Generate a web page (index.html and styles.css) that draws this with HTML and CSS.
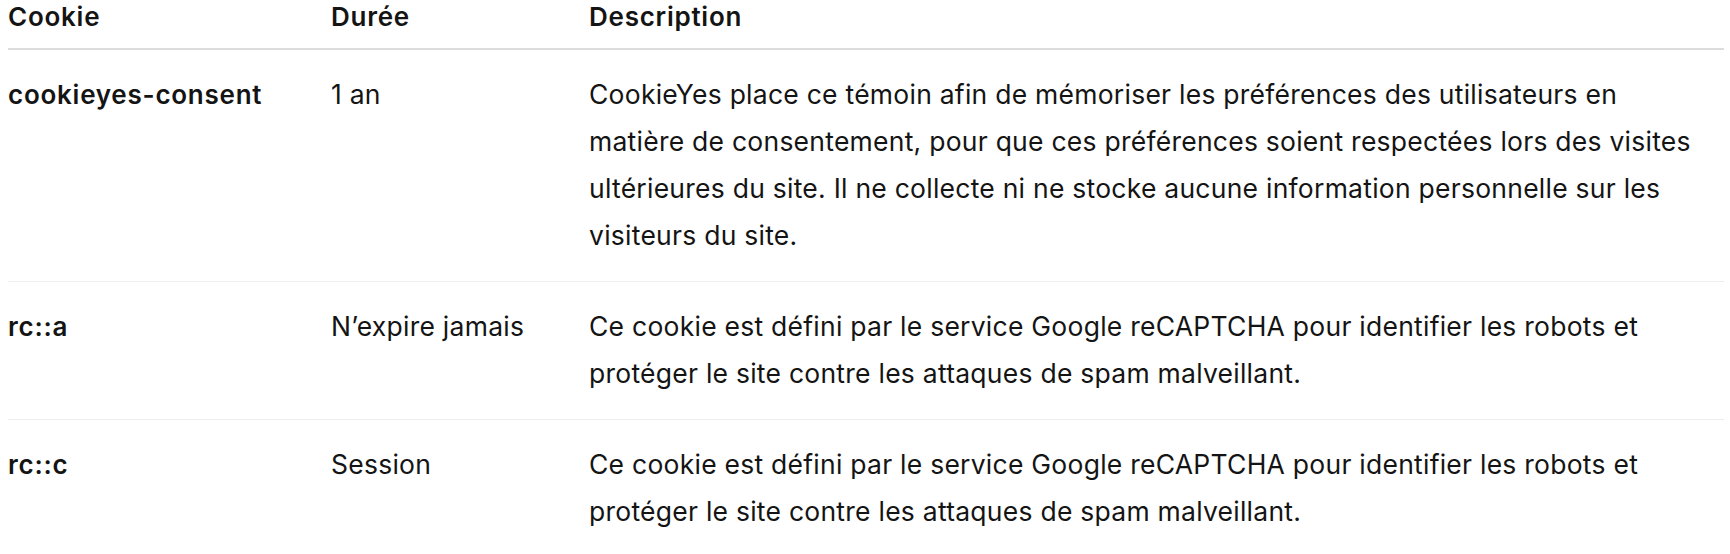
FILE: index.html
```html
<!DOCTYPE html>
<html lang="fr">
<head>
<meta charset="utf-8">
<title>Cookies</title>
<link rel="stylesheet" href="styles.css">
</head>
<body>
<table class="cookie-table">
  <thead>
    <tr>
      <th class="col-name">Cookie</th>
      <th class="col-duration">Durée</th>
      <th class="col-desc">Description</th>
    </tr>
  </thead>
  <tbody>
    <tr>
      <td class="cell-name">cookieyes-consent</td>
      <td>1 an</td>
      <td class="cell-desc">CookieYes place ce témoin afin de mémoriser les préférences des utilisateurs en matière de consentement, pour que ces préférences soient respectées lors des visites ultérieures du site. Il ne collecte ni ne stocke aucune information personnelle sur les visiteurs du site.</td>
    </tr>
    <tr>
      <td class="cell-name">rc::a</td>
      <td>N’expire jamais</td>
      <td class="cell-desc">Ce cookie est défini par le service Google reCAPTCHA pour identifier les robots et protéger le site contre les attaques de spam malveillant.</td>
    </tr>
    <tr>
      <td class="cell-name">rc::c</td>
      <td>Session</td>
      <td class="cell-desc">Ce cookie est défini par le service Google reCAPTCHA pour identifier les robots et protéger le site contre les attaques de spam malveillant.</td>
    </tr>
  </tbody>
</table>
</body>
</html>
```

FILE: styles.css
```css
html, body {
  margin: 0;
  background: #ffffff;
}

body {
  padding: 0 6px 0 8px;
  font-family: Inter, "Noto Sans", "Liberation Sans", sans-serif;
  color: #141414;
  -webkit-font-smoothing: antialiased;
}

.cookie-table {
  width: 1716px;
  border-collapse: collapse;
  table-layout: fixed;
  font-size: 26.5px;
  letter-spacing: 0.25px;
}

.col-name { width: 323px; }
.col-duration { width: 258px; }

.cookie-table th {
  text-align: left;
  font-size: 26px;
  font-weight: 600;
  letter-spacing: 0.75px;
  line-height: 30px;
  padding: 2px 0 16px 0;
  border-bottom: 2px solid #dcdcdc;
  vertical-align: top;
}

.cookie-table td {
  text-align: left;
  font-weight: 400;
  line-height: 47px;
  padding: 21px 0 22px 0;
  border-bottom: 1px solid #eeeeee;
  vertical-align: top;
}

.cookie-table .cell-name {
  font-size: 26px;
  font-weight: 600;
  letter-spacing: 0.75px;
}

.cookie-table .cell-desc {
  padding-right: 30px;
}
```
